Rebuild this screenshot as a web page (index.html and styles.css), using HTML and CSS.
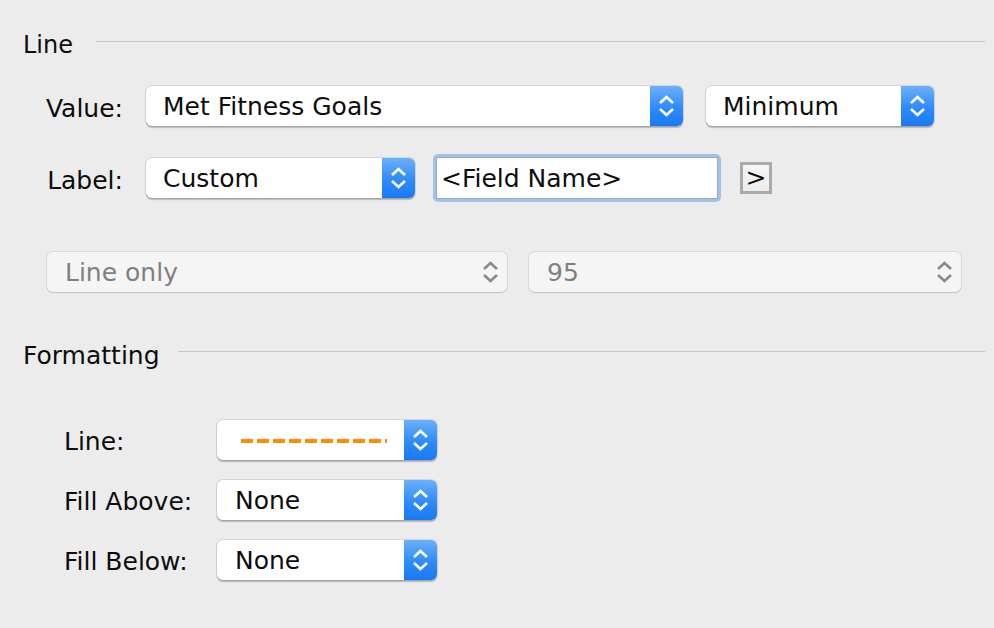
FILE: index.html
```html
<!DOCTYPE html>
<html>
<head>
<meta charset="utf-8">
<link rel="stylesheet" href="styles.css">
</head>
<body>
<div class="panel">
  <div class="heading h-line"><span class="htext">Line</span><span class="rule"></span></div>

  <div class="row row-value">
    <span class="lbl lbl-low">Value:</span>
    <div class="popup w-value"><span class="val">Met Fitness Goals</span><span class="stepper"><svg width="33" height="40" viewBox="0 0 33 40"><polyline points="10,17 16.5,11 23,17"/><polyline points="10,23 16.5,29 23,23"/></svg></span></div>
    <div class="popup w-min"><span class="val">Minimum</span><span class="stepper"><svg width="33" height="40" viewBox="0 0 33 40"><polyline points="10,17 16.5,11 23,17"/><polyline points="10,23 16.5,29 23,23"/></svg></span></div>
  </div>

  <div class="row row-label">
    <span class="lbl lbl-low">Label:</span>
    <div class="popup w-custom"><span class="val">Custom</span><span class="stepper"><svg width="33" height="40" viewBox="0 0 33 40"><polyline points="10,17 16.5,11 23,17"/><polyline points="10,23 16.5,29 23,23"/></svg></span></div>
    <div class="field"><div class="field-inner">&lt;Field Name&gt;</div></div>
    <div class="arrow-btn">&gt;</div>
  </div>

  <div class="row row-disabled">
    <div class="popup disabled w-lineonly"><span class="val">Line only</span><span class="stepper"><svg width="33" height="40" viewBox="0 0 33 40"><polyline points="10,17 16.5,11 23,17"/><polyline points="10,23 16.5,29 23,23"/></svg></span></div>
    <div class="popup disabled w-95"><span class="val">95</span><span class="stepper"><svg width="33" height="40" viewBox="0 0 33 40"><polyline points="10,17 16.5,11 23,17"/><polyline points="10,23 16.5,29 23,23"/></svg></span></div>
  </div>

  <div class="heading h-format"><span class="htext">Formatting</span><span class="rule"></span></div>

  <div class="frows">
    <div class="frow">
      <span class="flbl">Line:</span>
      <div class="popup w-fmt"><span class="val"><span class="dash"></span></span><span class="stepper"><svg width="33" height="40" viewBox="0 0 33 40"><polyline points="10,17 16.5,11 23,17"/><polyline points="10,23 16.5,29 23,23"/></svg></span></div>
    </div>
    <div class="frow">
      <span class="flbl">Fill Above:</span>
      <div class="popup w-fmt"><span class="val">None</span><span class="stepper"><svg width="33" height="40" viewBox="0 0 33 40"><polyline points="10,17 16.5,11 23,17"/><polyline points="10,23 16.5,29 23,23"/></svg></span></div>
    </div>
    <div class="frow">
      <span class="flbl">Fill Below:</span>
      <div class="popup w-fmt"><span class="val">None</span><span class="stepper"><svg width="33" height="40" viewBox="0 0 33 40"><polyline points="10,17 16.5,11 23,17"/><polyline points="10,23 16.5,29 23,23"/></svg></span></div>
    </div>
  </div>
</div>
</body>
</html>
```

FILE: styles.css
```css
html, body {
  margin: 0;
  padding: 0;
}
body {
  width: 994px;
  height: 628px;
  background: #ececec;
  font-family: "DejaVu Sans", "Liberation Sans", sans-serif;
  font-size: 25px;
  color: #0d0d0d;
  overflow: hidden;
}
.panel {
  display: flex;
  flex-direction: column;
}

/* section headings */
.heading {
  display: flex;
  align-items: flex-start;
  height: 28px;
  line-height: 28px;
  padding: 0 9px 0 23px;
}
.h-line { margin-top: 30px; font-size: 24px; }
.h-format { margin-top: 49px; }
.htext { white-space: nowrap; padding-top: 1px; }
.rule {
  flex: 1;
  height: 1px;
  background: #c6c6c6;
  margin-top: 11px;
  margin-left: 23px;
}
.h-format .rule { margin-left: 18px; margin-top: 10px; }

/* rows */
.row {
  display: flex;
  align-items: center;
  height: 40px;
}
.row-value { margin-top: 28px; padding-left: 40px; }
.row-label { margin-top: 32px; padding-left: 40px; }
.row-disabled { margin-top: 54px; padding-left: 47px; }

.lbl {
  width: 83px;
  text-align: right;
  margin-right: 23px;
  line-height: 28px;
  white-space: nowrap;
}
.lbl-low { padding-top: 6px; }

/* popup buttons */
.popup {
  display: flex;
  height: 40px;
  line-height: 40px;
  background: #fff;
  border-radius: 6px;
  box-shadow: 0 0 0 1px rgba(0,0,0,0.10), 0 1.5px 1px rgba(0,0,0,0.22);
  overflow: hidden;
  flex: none;
}
.popup .val {
  flex: 1;
  padding-left: 17px;
  padding-top: 2px;
  box-sizing: border-box;
  white-space: nowrap;
  display: flex;
  align-items: center;
}
.stepper {
  width: 33px;
  height: 40px;
  background: linear-gradient(#6cb0fa, #2e8bf8 55%, #1a78f6);
  display: block;
}
.stepper svg {
  display: block;
}
.stepper polyline {
  fill: none;
  stroke: #fff;
  stroke-width: 2.6;
  stroke-linecap: butt;
  stroke-linejoin: miter;
}

.w-value { width: 537px; margin-right: 23px; }
.w-min { width: 228px; }
.w-custom { width: 269px; margin-right: 18px; }

.popup.disabled {
  background: #f5f5f5;
  color: #7f7f7f;
  box-shadow: 0 0 0 1px rgba(0,0,0,0.08), 0 1px 1px rgba(0,0,0,0.10);
}
.popup.disabled .val { padding-left: 18px; }
.popup.disabled .stepper {
  background: transparent;
}
.popup.disabled polyline {
  stroke: #8a8a8a;
}
.w-lineonly { width: 460px; margin-right: 22px; }
.w-95 { width: 432px; }
.w-95 .val { padding-left: 17px; }

/* text field */
.field {
  width: 288px;
  height: 48px;
  box-sizing: border-box;
  border: 3px solid #9dc3f1;
  border-radius: 5px;
  margin-right: 19px;
  flex: none;
}
.field-inner {
  height: 100%;
  box-sizing: border-box;
  border: 1px solid #a6a6a6;
  background: #fff;
  padding-left: 4px;
  padding-top: 1px;
  line-height: 40px;
  white-space: nowrap;
}

.arrow-btn {
  width: 32px;
  height: 32px;
  box-sizing: border-box;
  border: 3px solid #aaaaaa;
  background: linear-gradient(#f6f6f6, #ececec);
  text-align: center;
  line-height: 26px;
  font-size: 25px;
  flex: none;
}

/* formatting rows */
.frows {
  margin-top: 51px;
  padding-left: 64px;
  display: flex;
  flex-direction: column;
  gap: 20px;
}
.frow {
  display: flex;
  align-items: center;
  height: 40px;
}
.flbl {
  width: 153px;
  white-space: nowrap;
  padding-top: 2px;
}
.w-fmt { width: 220px; }
.w-fmt .val { padding-left: 18px; }
.dash {
  display: block;
  margin-left: 6px;
  width: 146px;
  height: 4px;
  margin-top: -1px;
  background: repeating-linear-gradient(90deg, #ff8a00 0 12px, transparent 12px 16px);
}
```
